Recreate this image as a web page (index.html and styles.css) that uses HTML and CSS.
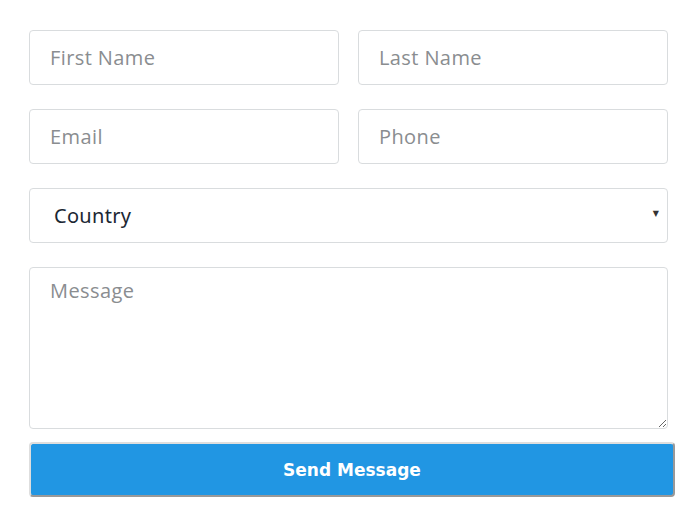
FILE: index.html
```html
<!DOCTYPE html>
<html>
<head>
<meta charset="utf-8">
<link rel="stylesheet" href="styles.css">
</head>
<body>
<form class="form">
  <div class="row">
    <input class="field" type="text" placeholder="First Name">
    <input class="field" type="text" placeholder="Last Name">
  </div>
  <div class="row">
    <input class="field" type="text" placeholder="Email">
    <input class="field" type="text" placeholder="Phone">
  </div>
  <div class="select-wrap">
    <select class="field select">
      <option>Country</option>
    </select>
    <span class="arrow">▼</span>
  </div>
  <textarea class="field message" placeholder="Message"></textarea>
  <button class="send" type="button">Send Message</button>
</form>
</body>
</html>
```
FILE: styles.css
```css
html, body {
  margin: 0;
  padding: 0;
  background: #fff;
}
.form {
  display: flex;
  flex-direction: column;
  padding: 30px 0 0 29px;
  width: 646px;
}
.row {
  display: grid;
  grid-template-columns: 310px 310px;
  column-gap: 19px;
  margin-bottom: 24px;
}
.field {
  box-sizing: border-box;
  height: 55px;
  border: 1px solid #d9dcde;
  border-radius: 4px;
  background: #fff;
  font-family: "Open Sans", sans-serif;
  font-size: 20px;
  letter-spacing: 0.4px;
  color: #333;
  padding: 0 20px;
  outline: none;
  margin: 0;
}
.field::placeholder {
  color: #8a8d90;
}
.select-wrap {
  position: relative;
  width: 639px;
  margin-bottom: 24px;
}
.select {
  width: 639px;
  appearance: none;
  -webkit-appearance: none;
  padding-left: 24px;
  font-family: "Noto Sans", sans-serif;
  font-size: 20px;
  letter-spacing: 0.3px;
  color: #1b2733;
}
.arrow {
  position: absolute;
  right: 9px;
  top: 21px;
  font-size: 8px;
  color: #333;
  font-family: "DejaVu Sans", sans-serif;
  pointer-events: none;
}
.message {
  width: 639px;
  height: 162px;
  padding: 9px 20px;
  resize: vertical;
  margin-bottom: 13px;
}
.send {
  box-sizing: border-box;
  width: 646px;
  height: 55px;
  background: #2196e3;
  color: #fff;
  border: 2px solid;
  border-color: #dedede #999 #999 #dedede;
  border-radius: 4px;
  font-family: "DejaVu Sans", sans-serif;
  font-weight: bold;
  font-size: 17px;
  letter-spacing: 0;
}
```
